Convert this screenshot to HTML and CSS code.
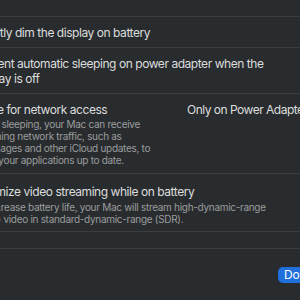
FILE: index.html
```html
<!DOCTYPE html>
<html lang="en">
<head>
  <meta charset="UTF-8">
  <title>Battery Options</title>
  <link rel="stylesheet" href="styles.css">
</head>
<body>
  <div class="sheet">
    <div class="list">
      <div class="row row-top"></div>

      <div class="row">
        <div class="text">
          <div class="title">Slightly dim the display on battery</div>
        </div>
      </div>

      <div class="row">
        <div class="text">
          <div class="title">Prevent automatic sleeping on power adapter when the display is off</div>
        </div>
      </div>

      <div class="row">
        <div class="text narrow">
          <div class="title">Wake for network access</div>
          <div class="desc">While sleeping, your Mac can receive incoming network traffic, such as iMessages and other iCloud updates, to keep your applications up to date.</div>
        </div>
        <div class="popup">Only on Power Adapter</div>
      </div>

      <div class="row row-last">
        <div class="text">
          <div class="title">Optimize video streaming while on battery</div>
          <div class="desc">To increase battery life, your Mac will stream high-dynamic-range (HDR) video in standard-dynamic-range (SDR).</div>
        </div>
      </div>
    </div>

    <div class="spacer"></div>

    <div class="footer">
      <button class="btn-done">Done</button>
    </div>
  </div>
</body>
</html>
```

FILE: styles.css
```css
:root {
  --bg: #292c2f;
  --line: #3b3e41;
  --text: #dcdddd;
  --muted: #9a9c9d;
  --blue: #1f6fdc;
}

* {
  margin: 0;
  padding: 0;
  box-sizing: border-box;
}

html, body {
  background: var(--bg);
  overflow: hidden;
}

body {
  font-family: "Inter", "Noto Sans", sans-serif;
  color: var(--text);
  width: 300px;
  height: 300px;
}

.sheet {
  margin-left: -26px;
  width: 360px;
}

.row {
  display: flex;
  align-items: flex-start;
  padding: 8px 0 7px;
  border-bottom: 1px solid var(--line);
}

.row-top {
  height: 17px;
  padding: 0;
}

.row-last {
  padding: 10px 0 6px;
}

.text {
  width: 310px;
}

.text.narrow {
  width: 186px;
}

.title {
  font-size: 12px;
  line-height: 15px;
  letter-spacing: -0.45px;
}

.desc {
  margin-top: 1px;
  font-size: 10px;
  line-height: 12px;
  letter-spacing: -0.3px;
  color: var(--muted);
}

.row-last .desc {
  margin-top: 2px;
}

.popup {
  margin-left: 27px;
  font-size: 12px;
  line-height: 15px;
  letter-spacing: -0.5px;
  white-space: nowrap;
}

.spacer {
  height: 17px;
  border-bottom: 1px solid var(--line);
}

.footer {
  display: flex;
  padding: 18px 0 0 304px;
}

.btn-done {
  background: var(--blue);
  color: white;
  border: none;
  border-radius: 5px;
  height: 16px;
  padding: 0 14px 0 6px;
  font-family: inherit;
  font-size: 12px;
  line-height: 16px;
  letter-spacing: -0.2px;
}
```
